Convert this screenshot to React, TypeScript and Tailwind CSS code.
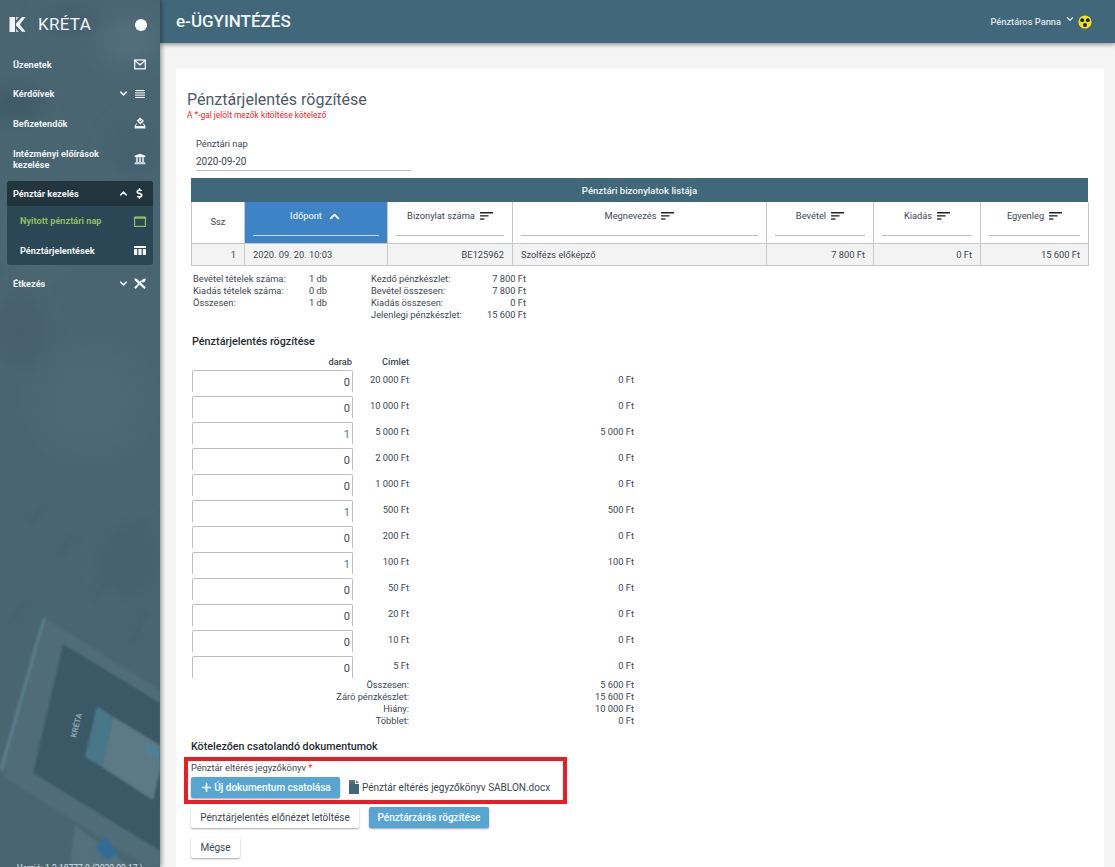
import React from "react";
import { ChevronDown, ChevronUp, Plus } from "lucide-react";
import { FaUniversity, FaDollarSign } from "react-icons/fa";

const Mail = () => (
  <svg width="12" height="11" viewBox="0 0 12 11" fill="none" stroke="#f4f6f7" strokeWidth="1.3">
    <rect x="0.7" y="1" width="10.6" height="8.8" />
    <path d="M0.8 1.6 6 5.8l5.2-4.2" />
  </svg>
);
const Lines = () => (
  <svg width="10" height="8" viewBox="0 0 10 8" fill="#f4f6f7">
    <rect y="0" width="10" height="1.1" />
    <rect y="2.3" width="10" height="1.1" />
    <rect y="4.6" width="10" height="1.1" />
    <rect y="6.9" width="10" height="1.1" />
  </svg>
);
const Vote = () => (
  <svg width="12" height="12" viewBox="0 0 12 12" aria-hidden="true">
    <path d="M6.2 0.4 10 3.9 6.4 7.4 2.6 3.8Z" fill="#f4f6f7" />
    <path d="M5 3.9 6.2 5 7.9 3.2" fill="none" stroke="#4a6572" strokeWidth="0.9" />
    <path d="M2.4 6.2 3.6 7.4H2.6L1.6 9H10.4L9.4 7.4H8.5L9.7 6.2 11.4 9V11.6H0.6V9Z" fill="#f4f6f7" />
  </svg>
);
const Calendar = () => (
  <svg width="12" height="11" viewBox="0 0 12 11" fill="none" stroke="#8fbc5f" strokeWidth="1.2">
    <rect x="0.6" y="1.4" width="10.8" height="9" />
    <path d="M0.6 1.6h10.8" strokeWidth="2.4" />
  </svg>
);
const TableIcon = () => (
  <svg width="12" height="9" viewBox="0 0 12 9" fill="#f4f6f7">
    <rect width="12" height="2" />
    <rect y="3" width="3.2" height="6" />
    <rect x="4.4" y="3" width="3.2" height="6" />
    <rect x="8.8" y="3" width="3.2" height="6" />
  </svg>
);
const Cutlery = () => (
  <svg width="12" height="11" viewBox="0 0 12 11" fill="#f4f6f7" aria-hidden="true">
    <path d="M0.3 0.2 3 1 11.8 9.4 10.4 10.9 5 6.2 0.8 2.6Z" />
    <path d="M8.2 3.6 1.6 10.9 0.2 9.6 7 2.6Z" />
    <path d="M11.8 0.4c0 1.8-1.2 3.8-2.8 4.2L7.4 3C7.8 1.6 9.8 0.2 11.8 0.4Z" />
  </svg>
);
const Logo = () => (
  <svg width="17" height="17" viewBox="0 0 17 17" fill="#f2f4f5">
    <path d="M0.5 1H6V16H0.5Z" />
    <path d="M7 7.6 13 1H16.6L10.8 8.4 16.6 15.8H13L7 9.4Z" />
    <path d="M7 1H10L7 4.4Z" opacity="0.75" />
    <path d="M7 12.6 9.8 16H7Z" opacity="0.75" />
  </svg>
);
const Badge = () => (
  <svg width="14" height="14" viewBox="0 0 14 14">
    <circle cx="7" cy="7" r="6.6" fill="#f3e113" />
    <circle cx="4.2" cy="5.2" r="1.9" fill="#1b1b1b" />
    <circle cx="9.8" cy="5.2" r="1.9" fill="#1b1b1b" />
    <circle cx="7" cy="10" r="1.9" fill="#1b1b1b" />
  </svg>
);
const SortIcon = () => (
  <svg width="13" height="8" viewBox="0 0 13 8" fill="#222" aria-hidden="true">
    <rect width="13" height="1.5" />
    <rect y="3.2" width="8.5" height="1.3" />
    <rect y="6.4" width="4.5" height="1.3" />
  </svg>
);
const FileIcon = () => (
  <svg width="10" height="14" viewBox="0 0 10 14" aria-hidden="true" className="ml-[9px]">
    <defs>
      <linearGradient id="fg" x1="0" y1="0" x2="0" y2="1">
        <stop offset="0" stopColor="#6d7478" />
        <stop offset="0.35" stopColor="#41687a" />
        <stop offset="1" stopColor="#41687a" />
      </linearGradient>
    </defs>
    <path d="M0 0H6V4H10V14H0Z" fill="url(#fg)" />
    <path d="M7 0 10 3H7Z" fill="#6d7478" />
  </svg>
);

const SidebarArt = () => (
  <svg className="absolute inset-0" width="160" height="867" viewBox="0 0 160 867" aria-hidden="true">
    <defs>
      <filter id="b8"><feGaussianBlur stdDeviation="10" /></filter>
      <filter id="b2"><feGaussianBlur stdDeviation="3" /></filter>
      <filter id="b1"><feGaussianBlur stdDeviation="1" /></filter>
    </defs>
    <g filter="url(#b8)">
      <ellipse cx="15" cy="105" rx="28" ry="18" fill="#3f5a68" />
      <ellipse cx="130" cy="40" rx="30" ry="24" fill="#526d7a" />
      <ellipse cx="70" cy="20" rx="30" ry="14" fill="#445f6d" />
      <ellipse cx="135" cy="150" rx="26" ry="30" fill="#446170" />
      <ellipse cx="40" cy="230" rx="30" ry="34" fill="#526d7a" />
      <ellipse cx="90" cy="400" rx="50" ry="50" fill="#4e6976" />
      <ellipse cx="20" cy="330" rx="25" ry="40" fill="#465f6c" />
      <ellipse cx="130" cy="560" rx="30" ry="40" fill="#456070" />
    </g>
    <g stroke="#415c68" strokeWidth="4" filter="url(#b2)" opacity="0.6">
      <path d="M42 505 30 525" />
      <path d="M72 532 60 558" />
      <path d="M110 567 96 598" />
      <path d="M25 600 10 625" />
      <path d="M148 610 130 645" />
      <path d="M145 520 138 535" />
    </g>
    <g filter="url(#b1)">
      <path d="M43 617 160 690V867H147L6 778 0 768Z" fill="#506c78" />
      <path d="M43 617 0 768 2 772 45 620Z" fill="#587f8d" />
      <path d="M63 644 160 703V851L33 773Z" fill="#3b5966" />
      <path d="M97 706 113 717 102 767 85 757Z" fill="#477789" />
      <path d="M113 717 160 745V770L153 800 102 767Z" fill="#5c7a85" />
      <path d="M147 743 160 750V759L146 752Z" fill="#48839a" />
      <path d="M75 825 130 867H70Z" fill="#52707c" />
      <path d="M95 848 106 837 118 853 107 860Z" fill="#336c96" />
    </g>
    <text x="0" y="0" transform="translate(76 738) rotate(-76)" fontSize="8" fontWeight="700" fill="#8ea5ae" fontFamily="Roboto, sans-serif">KRÉTA</text>
  </svg>
);

const Item = ({ label, icon, chevron, h = "h-[29.5px]" }: { label: React.ReactNode; icon: React.ReactNode; chevron?: "down" | "up"; h?: string }) => (
  <div className={`flex items-center pl-[13px] pr-[14px] ${h}`}>
    <span className="flex-1 text-[9.2px] leading-[11px] font-bold text-[#eef1f2]">{label}</span>
    {chevron === "down" && <ChevronDown size={11} strokeWidth={3.2} className="text-[#eef1f2] mr-[4px]" />}
    <span className="w-[13px] flex justify-center">{icon}</span>
  </div>
);

const Sidebar = () => (
  <aside className="relative w-[160px] shrink-0 bg-[#4a6572] overflow-hidden z-20 shadow-[2px_0_4px_rgba(0,0,0,0.35)]">
    <SidebarArt />
    <div className="relative">
      <div className="flex items-center h-[49.5px] pl-[9px] pr-[13px]">
        <Logo />
        <span className="ml-[12px] flex-1 text-[17px] tracking-[0.3px] text-[#f4f6f7]">KRÉTA</span>
        <span className="w-[12px] h-[12px] rounded-full bg-white" />
      </div>
      <Item label="Üzenetek" icon={<Mail />} />
      <Item label="Kérdőívek" icon={<Lines />} chevron="down" />
      <Item label="Befizetendők" icon={<Vote />} />
      <Item h="h-[41.5px]" label={<>Intézményi előírások<br />kezelése</>} icon={<FaUniversity size={12} color="#f4f6f7" />} />
      <div className="mx-[7px] mt-[1.5px] rounded-[3px] overflow-hidden bg-[#2b4655]">
        <div className="flex items-center h-[25px] pl-[6px] pr-[7px] bg-[#22353f]">
          <span className="flex-1 text-[9.2px] font-bold text-[#eef1f2]">Pénztár kezelés</span>
          <ChevronUp size={11} strokeWidth={3.2} className="text-[#eef1f2] mr-[4px]" />
          <span className="w-[13px] flex justify-center"><FaDollarSign size={11} color="#f4f6f7" /></span>
        </div>
        <div className="flex items-center h-[30px] pl-[13px] pr-[7px]">
          <span className="flex-1 text-[9.2px] font-bold text-[#8fbc5f]">Nyitott pénztári nap</span>
          <span className="w-[13px] flex justify-center"><Calendar /></span>
        </div>
        <div className="flex items-center h-[29px] pl-[13px] pr-[7px]">
          <span className="flex-1 text-[9.2px] font-bold text-[#eef1f2]">Pénztárjelentések</span>
          <span className="w-[13px] flex justify-center"><TableIcon /></span>
        </div>
      </div>
      <div className="mt-[3px]">
        <Item h="h-[30px]" label="Étkezés" icon={<Cutlery />} chevron="down" />
      </div>
    </div>
    <div className="absolute left-[17px] top-[863px] text-[8.5px] leading-[10px] text-[#dce4e8] whitespace-nowrap">Verzió: 1.2.18777.0 (2020.09.17.)</div>
  </aside>
);

const Th = ({ label, active }: { label: string; active?: boolean }) => (
  <th className={`border border-[#c8c8c8] border-t-0 p-0 align-top font-normal ${active ? "bg-[#3d83c6] text-white font-medium" : "text-[#3c4650]"}`}>
    <div className="flex flex-col h-[40px] px-[8px]">
      <div className="flex items-center justify-center gap-[5px] h-[22px] mt-[3px]">
        <span>{label}</span>
        {active ? <ChevronUp size={15} strokeWidth={3} /> : <SortIcon />}
      </div>
      <div className={`mt-[8px] border-b ${active ? "border-[#c9d9ea]" : "border-[#bdbdbd]"}`} />
    </div>
  </th>
);
const Td = ({ children, right }: { children: React.ReactNode; right?: boolean }) => (
  <td className={`border border-[#c8c8c8] bg-[#f3f3f3] h-[22px] px-[8px] pt-[1px] pb-0 text-[#3c4650] ${right ? "text-right" : "text-left"}`}>{children}</td>
);

const denoms: [string, string, string][] = [
  ["0", "20 000 Ft", "0 Ft"],
  ["0", "10 000 Ft", "0 Ft"],
  ["1", "5 000 Ft", "5 000 Ft"],
  ["0", "2 000 Ft", "0 Ft"],
  ["0", "1 000 Ft", "0 Ft"],
  ["1", "500 Ft", "500 Ft"],
  ["0", "200 Ft", "0 Ft"],
  ["1", "100 Ft", "100 Ft"],
  ["0", "50 Ft", "0 Ft"],
  ["0", "20 Ft", "0 Ft"],
  ["0", "10 Ft", "0 Ft"],
  ["0", "5 Ft", "0 Ft"],
];
const totals: [string, string][] = [
  ["Összesen:", "5 600 Ft"],
  ["Záró pénzkészlet:", "15 600 Ft"],
  ["Hiány:", "10 000 Ft"],
  ["Többlet:", "0 Ft"],
];

const Pair = ({ a, b }: { a: string; b: string }) => (
  <div className="flex justify-between h-[12px] leading-[12px] whitespace-nowrap w-full">
    <span>{a}</span>
    <span>{b}</span>
  </div>
);

const btn = "h-[21px] rounded-[2px] flex items-center justify-center text-[10px] shadow-[0_1px_2px_rgba(0,0,0,0.35)]";

export default function App() {
  return (
    <div className="flex h-[867px] w-full overflow-hidden bg-[#f5f5f5] font-['Roboto',sans-serif] text-[9.3px] text-[#3c4650]">
      <Sidebar />
      <div className="flex-1 min-w-0 flex flex-col">
        <header className="h-[43px] shrink-0 bg-[#41687a] flex items-center pl-[16px] pr-[23px] shadow-[0_2px_4px_rgba(0,0,0,0.35)] relative z-10">
          <span className="flex-1 text-[17px] font-medium text-[#f2f5f6]">e-ÜGYINTÉZÉS</span>
          <span className="text-[9.3px] font-medium text-[#dbe3e7]">Pénztáros Panna</span>
          <ChevronDown size={10} strokeWidth={3.2} className="text-[#dbe3e7] ml-[4px] mr-[3px] -mt-[5px]" />
          <Badge />
        </header>
        <main className="flex-1 min-h-0 pt-[26px] pl-[16px] pr-[11px]">
          <div className="bg-white rounded-t-[2px] h-full pt-[21px] pl-[15px] pr-[16px]">
            <h1 className="-ml-[4px] text-[16px] leading-[20px] font-normal text-[#4b5a66]">Pénztárjelentés rögzítése</h1>
            <p className="-ml-[4px] text-[8.4px] leading-[10px] text-[#e8261e]">A *-gal jelölt mezők kitöltése kötelező</p>

            <div className="ml-[5px] mt-[18px] w-[215px]">
              <div className="h-[12px] leading-[12px]">Pénztári nap</div>
              <div className="mt-[6px] h-[15px] text-[10px] leading-[12px] border-b border-[#bdbdbd]">2020-09-20</div>
            </div>

            <div className="mt-[7px] h-[24px] pt-[2px] bg-[#41687a] flex items-center justify-center text-[9.6px] font-medium text-[#eef3f5]">Pénztári bizonylatok listája</div>
            <table className="w-[897px] table-fixed border-collapse">
              <colgroup>
                <col className="w-[53px]" />
                <col className="w-[143px]" />
                <col className="w-[125px]" />
                <col className="w-[254px]" />
                <col className="w-[107px]" />
                <col className="w-[107px]" />
                <col className="w-[108px]" />
              </colgroup>
              <thead>
                <tr className="h-[41px]">
                  <th className="border border-[#c8c8c8] border-t-0 font-normal text-[#3c4650] align-middle">Ssz</th>
                  <Th label="Időpont" active />
                  <Th label="Bizonylat száma" />
                  <Th label="Megnevezés" />
                  <Th label="Bevétel" />
                  <Th label="Kiadás" />
                  <Th label="Egyenleg" />
                </tr>
              </thead>
              <tbody>
                <tr>
                  <Td right>1</Td>
                  <Td>2020. 09. 20. 10:03</Td>
                  <Td right>BE125962</Td>
                  <Td>Szolfézs előképző</Td>
                  <Td right>7 800 Ft</Td>
                  <Td right>0 Ft</Td>
                  <Td right>15 600 Ft</Td>
                </tr>
              </tbody>
            </table>

            <div className="mt-[7px] flex pl-[2px]">
              <div className="w-[134px]">
                <Pair a="Bevétel tételek száma:" b="1 db" />
                <Pair a="Kiadás tételek száma:" b="0 db" />
                <Pair a="Összesen:" b="1 db" />
              </div>
              <div className="ml-[44px] w-[155px]">
                <Pair a="Kezdő pénzkészlet:" b="7 800 Ft" />
                <Pair a="Bevétel összesen:" b="7 800 Ft" />
                <Pair a="Kiadás összesen:" b="0 Ft" />
                <Pair a="Jelenlegi pénzkészlet:" b="15 600 Ft" />
              </div>
            </div>

            <h2 className="ml-[1px] mt-[14px] h-[14px] text-[10.8px] leading-[14px] font-medium text-[#1f2a33]">Pénztárjelentés rögzítése</h2>
            <div className="ml-[1px] mt-[7px] grid grid-cols-[160px_57px] h-[12px] leading-[12px] font-medium text-right">
              <span>darab</span>
              <span>Címlet</span>
            </div>
            <div className="ml-[1px] mt-[2px] flex flex-col gap-[4px]">
              {denoms.map(([n, d, v], i) => (
                <div key={i} className="grid grid-cols-[161px_56px_225px] h-[22px] text-right">
                  <div className={`h-[22px] rounded-t-[2px] border border-b-0 border-[#bdbdbd] pr-[2px] pt-[6px] text-[11px] leading-[12px] ${n === "1" ? "text-[#55789a]" : "text-[#3c4650]"}`}>{n}</div>
                  <span className="pt-[4px] leading-[12px]">{d}</span>
                  <span className="pt-[4px] leading-[12px]">{v}</span>
                </div>
              ))}
            </div>
            <div className="ml-[1px] mt-[1px]">
              {totals.map(([a, b]) => (
                <div key={a} className="grid grid-cols-[217px_225px] h-[12px] leading-[12px] text-right">
                  <span>{a}</span>
                  <span>{b}</span>
                </div>
              ))}
            </div>

            <h2 className="mt-[13px] h-[14px] text-[10.7px] leading-[14px] font-medium text-[#1f2a33]">Kötelezően csatolandó dokumentumok</h2>
            <div className="-ml-[7px] mt-[3px] w-[383px] h-[47px] border-[4px] border-[#ed1c24] pl-[3px]">
              <div className="mt-[1px] h-[12px] leading-[12px]">Pénztár eltérés jegyzőkönyv <span className="text-[#e8261e]">*</span></div>
              <div className="mt-[3px] flex items-center">
                <div className={`${btn} w-[149px] bg-[#56a5d3] text-white font-medium`}>
                  <Plus size={13} strokeWidth={3} className="mr-[1px]" />
                  Új dokumentum csatolása
                </div>
                <FileIcon />
                <span className="ml-[3px] text-[10px]">Pénztár eltérés jegyzőkönyv SABLON.docx</span>
              </div>
            </div>
            <div className="mt-[3px] flex gap-[10px]">
              <div className={`${btn} w-[168px] bg-white`}>Pénztárjelentés előnézet letöltése</div>
              <div className={`${btn} w-[120px] bg-[#56a5d3] text-white font-medium`}>Pénztárzárás rögzítése</div>
            </div>
            <div className={`${btn} mt-[9px] w-[49px] bg-white`}>Mégse</div>
          </div>
        </main>
      </div>
    </div>
  );
}
